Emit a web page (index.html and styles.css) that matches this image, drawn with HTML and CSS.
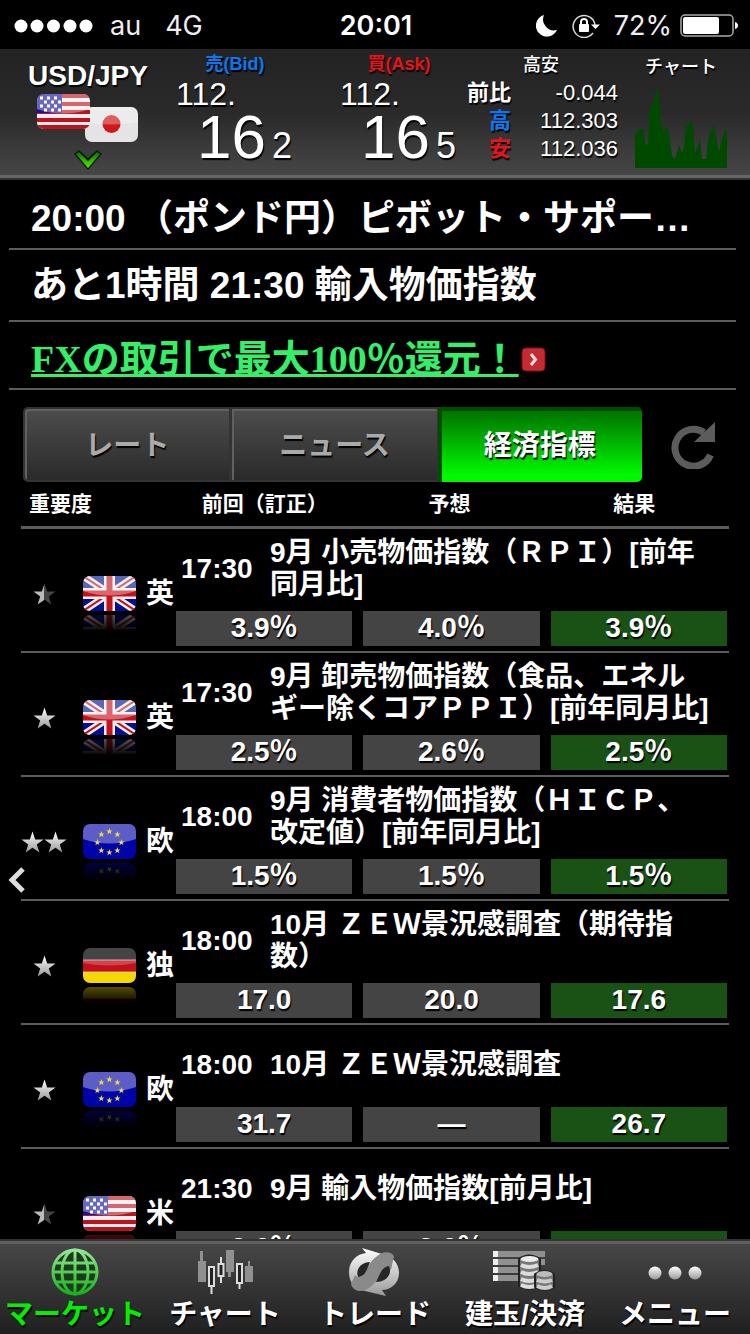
FILE: index.html
```html
<!DOCTYPE html>
<html lang="ja">
<head>
  <meta charset="UTF-8">
  <meta name="viewport" content="width=device-width, initial-scale=1">
  <title>経済指標</title>
  <link rel="stylesheet" href="styles.css">
</head>
<body>

  <!-- shared flags, stars and gradients -->
  <svg class="defs" width="0" height="0" aria-hidden="true">
    <defs>
      <clipPath id="round"><rect width="53" height="35" rx="7"/></clipPath>
      <linearGradient id="fade" x1="0" y1="0" x2="0" y2="1">
        <stop offset="0" stop-color="#000" stop-opacity=".6"/>
        <stop offset="1" stop-color="#000"/>
      </linearGradient>
      <linearGradient id="silver" x1="0" y1="0" x2="0" y2="1">
        <stop offset="0" stop-color="#fff"/>
        <stop offset="1" stop-color="#999"/>
      </linearGradient>
      <linearGradient id="half" x1="0" y1="0" x2="1" y2="0">
        <stop offset=".5" stop-color="#bbb"/>
        <stop offset=".5" stop-color="#444"/>
      </linearGradient>
      <linearGradient id="green" gradientUnits="userSpaceOnUse" x1="0" y1="0" x2="0" y2="48">
        <stop offset="0" stop-color="#9be89b"/>
        <stop offset="1" stop-color="#12b012"/>
      </linearGradient>
      <linearGradient id="lime" x1="0" y1="0" x2="0" y2="1">
        <stop offset="0" stop-color="#0a6a0a"/>
        <stop offset="1" stop-color="#5af000"/>
      </linearGradient>
      <path id="gloss" d="M0 0H53V15Q26 24 0 15Z" fill="#fff" fill-opacity=".36"/>
      <path id="star" d="M12 0L14.8 8.5H23.5L16.5 13.7L19.2 22L12 17L4.8 22L7.5 13.7L.5 8.5H9.200Z"/>
      <g id="uk" clip-path="url(#round)">
        <rect width="53" height="35" fill="#00108f"/>
        <path d="M0 0L53 35M53 0L0 35" stroke="#eee" stroke-width="7"/>
        <path d="M0 0L53 35M53 0L0 35" stroke="#c8101c" stroke-width="2"/>
        <path d="M26.500 0V35M0 17.500H53" stroke="#eee" stroke-width="11"/>
        <path d="M26.500 0V35M0 17.500H53" stroke="#c8101c" stroke-width="6"/>
        <use href="#gloss"/>
      </g>
      <g id="eu" clip-path="url(#round)">
        <rect width="53" height="35" fill="#0003a8"/>
        <use href="#gloss"/>
        <g fill="#f2e034">
          <use href="#star" transform="translate(23 4) scale(.28)"/>
          <use href="#star" transform="translate(31 7) scale(.28)"/>
          <use href="#star" transform="translate(35 15) scale(.28)"/>
          <use href="#star" transform="translate(31 23) scale(.28)"/>
          <use href="#star" transform="translate(23 25) scale(.28)"/>
          <use href="#star" transform="translate(15 23) scale(.28)"/>
          <use href="#star" transform="translate(11 15) scale(.28)"/>
          <use href="#star" transform="translate(15 7) scale(.28)"/>
        </g>
      </g>
      <g id="de" clip-path="url(#round)">
        <rect width="53" height="12" fill="#111"/>
        <rect y="12" width="53" height="12" fill="#c4101a"/>
        <rect y="24" width="53" height="11" fill="#f4d800"/>
        <path d="M0 0H53V15Q26 20 0 15Z" fill="#fff" fill-opacity=".22"/>
        <path d="M0 12H53M0 24H53" stroke="#fff" stroke-opacity=".6"/>
      </g>
      <g id="us" clip-path="url(#round)">
        <rect width="53" height="35" fill="#eee"/>
        <path d="M0 2H53M0 10H53M0 18H53M0 26H53M0 33H53" stroke="#c0121e" stroke-width="4"/>
        <rect width="25" height="19" fill="#1414a0"/>
        <path d="M3 4H24M7 8H24M3 12H24M7 16H24" stroke="#fff" stroke-width="3" stroke-dasharray="3 4"/>
        <use href="#gloss"/>
      </g>
      <g id="jp" clip-path="url(#round)">
        <rect width="53" height="35" fill="#e4e4e4"/>
        <circle cx="26.500" cy="17" r="9" fill="#d0181c"/>
        <path d="M0 0H53V15Q26 20 0 15Z" fill="#fff" fill-opacity=".3"/>
      </g>
    </defs>
  </svg>

  <div class="status">
    <div class="status-left">
      <svg width="80" height="14" viewBox="0 0 80 14" fill="#fff"><circle cx="7" cy="7" r="6.500"/><circle cx="23" cy="7" r="6.500"/><circle cx="39.500" cy="7" r="6.500"/><circle cx="56" cy="7" r="6.500"/><circle cx="72" cy="7" r="6.500"/></svg>
      <span>au</span>
      <span class="network">4G</span>
    </div>
    <strong>20:01</strong>
    <div class="status-right">
      <svg width="22" height="22" viewBox="0 0 22 22"><path d="M8 0A11 11 0 1 0 21 15A11 11 0 0 1 8 0Z" fill="#fff"/></svg>
      <svg class="lock" width="28" height="24" viewBox="0 0 28 24"><path d="M21 19A11 11 0 1 1 23 11" fill="none" stroke="#ddd" stroke-width="1.500"/><path d="M19 10.500H28L23.500 15Z" fill="#fff"/><rect x="7" y="10" width="10" height="8" rx="1" fill="#fff"/><path d="M9 11V8A3 3 0 0 1 15 8V11" fill="none" stroke="#fff" stroke-width="2"/></svg>
      <span>72%</span>
      <svg width="58" height="24" viewBox="0 0 58 24"><rect x="1" y="1" width="52" height="21" rx="4" fill="none" stroke="#aaa" stroke-width="1.500"/><rect x="3" y="3" width="36" height="17" rx="2" fill="#fff"/><path d="M55 8Q58 9 58 11.500T55 15Z" fill="#fff"/></svg>
    </div>
  </div>

  <header class="quote">
    <div class="pair">
      <b>USD/JPY</b>
      <svg width="102" height="48" viewBox="0 0 102 48"><use href="#jp" transform="translate(48 13)"/><use href="#us"/></svg>
      <svg class="arrow" width="30" height="20" viewBox="0 0 30 20"><path d="M1 4L6 0L15 8L24 0L29 4L15 20Z" fill="#031f03"/><path d="M3 4L6 2L15 11L24 2L27 4L15 18Z" fill="url(#lime)"/></svg>
    </div>
    <div class="price">
      <div class="side bid">売(Bid)</div>
      <div class="figure">112.</div>
      <div class="pips"><span>16</span><small>2</small></div>
    </div>
    <div class="price last">
      <div class="side ask">買(Ask)</div>
      <div class="figure">112.</div>
      <div class="pips"><span>16</span><small>5</small></div>
    </div>
    <div class="range">
      <h2>高安</h2>
      <dl>
        <dt>前比</dt><dd>-0.044</dd>
        <dt class="bid">高</dt><dd>112.303</dd>
        <dt class="ask">安</dt><dd>112.036</dd>
      </dl>
    </div>
    <div class="mini">
      <h2>チャート</h2>
      <svg width="92" height="81" viewBox="0 0 92 81"><path d="M0 81V45L3 46V42H9V46L10 58L13 57L15 20L18 17L20 7L22 3L23 0L25 20L26 36L29 46L32 37L35 52L37 69L40 72L44 58L47 66L49 61L51 38L53 40L55 32L58 38L60 66L62 60L65 52L67 72L71 72L73 54L75 45L79 38L81 50L84 65L87 52L90 43H92V81Z" fill="#004a00"/></svg>
    </div>
  </header>

  <section class="news">
    <p class="news-row">20:00 （ポンド円）ピボット・サポー…</p>
    <p class="news-row">あと1時間 21:30 輸入物価指数</p>
    <p class="news-row promo"><a href="#">FXの取引で最大100％還元！</a><svg width="25" height="25" viewBox="0 0 25 25"><rect x="1" y="1" width="23" height="23" rx="4" fill="#c32b32" stroke="#8c0e14"/><path d="M10 7L14.500 12.500L10 18" fill="none" stroke="#f4dcdc" stroke-width="3"/></svg></p>
  </section>

  <nav class="tabs">
    <div class="segments">
      <button type="button">レート</button>
      <button type="button">ニュース</button>
      <button type="button" class="active">経済指標</button>
    </div>
    <button type="button" class="reload" aria-label="更新">
      <svg width="46" height="48" viewBox="0 0 46 48"><path d="M39.500 34A18.500 18.500 0 1 1 33 11.500" fill="none" stroke="#5c5c5c" stroke-width="7"/><path d="M44 1V21H23Z" fill="#5c5c5c"/></svg>
    </button>
  </nav>

  <main class="board">
    <table>
      <thead>
        <tr><th class="level">重要度</th><th>前回（訂正）</th><th>予想</th><th>結果</th></tr>
      </thead>
      <tbody>
        <tr>
          <td class="country" rowspan="2"><div>
            <span class="stars"><svg width="23" height="22" viewBox="0 0 24 22"><use href="#star" fill="url(#half)"/></svg></span>
            <svg class="flag" width="53" height="36"><use href="#uk"/><use href="#uk" class="mirror"/><rect y="37" width="53" height="19" fill="url(#fade)"/><rect y="55" width="53" height="19"/><rect y="35" width="53" height="4"/></svg>
            <span>英</span>
          </div></td>
          <td class="event" colspan="3"><div><time>17:30</time><span>9月 小売物価指数（ＲＰＩ）[前年同月比]</span></div></td>
        </tr>
        <tr><td class="value">3.9％</td><td class="value">4.0％</td><td class="value result">3.9％</td></tr>
      </tbody>
      <tbody>
        <tr>
          <td class="country" rowspan="2"><div>
            <span class="stars"><svg width="23" height="22" viewBox="0 0 24 22"><use href="#star" fill="url(#silver)"/></svg></span>
            <svg class="flag" width="53" height="36"><use href="#uk"/><use href="#uk" class="mirror"/><rect y="37" width="53" height="19" fill="url(#fade)"/><rect y="55" width="53" height="19"/><rect y="35" width="53" height="4"/></svg>
            <span>英</span>
          </div></td>
          <td class="event" colspan="3"><div><time>17:30</time><span>9月 卸売物価指数（食品、エネルギー除くコアＰＰＩ）[前年同月比]</span></div></td>
        </tr>
        <tr><td class="value">2.5％</td><td class="value">2.6％</td><td class="value result">2.5％</td></tr>
      </tbody>
      <tbody>
        <tr>
          <td class="country" rowspan="2"><div>
            <span class="stars"><svg width="23" height="22" viewBox="0 0 24 22"><use href="#star" fill="url(#silver)"/></svg><svg width="23" height="22" viewBox="0 0 24 22"><use href="#star" fill="url(#silver)"/></svg></span>
            <svg class="flag" width="53" height="36"><use href="#eu"/><use href="#eu" class="mirror"/><rect y="37" width="53" height="19" fill="url(#fade)"/><rect y="55" width="53" height="19"/><rect y="35" width="53" height="4"/></svg>
            <span>欧</span>
          </div></td>
          <td class="event" colspan="3"><div><time>18:00</time><span>9月 消費者物価指数（ＨＩＣＰ、改定値）[前年同月比]</span></div></td>
        </tr>
        <tr><td class="value">1.5％</td><td class="value">1.5％</td><td class="value result">1.5％</td></tr>
      </tbody>
      <tbody>
        <tr>
          <td class="country" rowspan="2"><div>
            <span class="stars"><svg width="23" height="22" viewBox="0 0 24 22"><use href="#star" fill="url(#silver)"/></svg></span>
            <svg class="flag" width="53" height="36"><use href="#de"/><use href="#de" class="mirror"/><rect y="37" width="53" height="19" fill="url(#fade)"/><rect y="55" width="53" height="19"/><rect y="35" width="53" height="4"/></svg>
            <span>独</span>
          </div></td>
          <td class="event" colspan="3"><div><time>18:00</time><span>10月 ＺＥＷ景況感調査（期待指数）</span></div></td>
        </tr>
        <tr><td class="value">17.0</td><td class="value">20.0</td><td class="value result">17.6</td></tr>
      </tbody>
      <tbody>
        <tr>
          <td class="country" rowspan="2"><div>
            <span class="stars"><svg width="23" height="22" viewBox="0 0 24 22"><use href="#star" fill="url(#silver)"/></svg></span>
            <svg class="flag" width="53" height="36"><use href="#eu"/><use href="#eu" class="mirror"/><rect y="37" width="53" height="19" fill="url(#fade)"/><rect y="55" width="53" height="19"/><rect y="35" width="53" height="4"/></svg>
            <span>欧</span>
          </div></td>
          <td class="event" colspan="3"><div><time>18:00</time><span>10月 ＺＥＷ景況感調査</span></div></td>
        </tr>
        <tr><td class="value">31.7</td><td class="value">―</td><td class="value result">26.7</td></tr>
      </tbody>
      <tbody>
        <tr>
          <td class="country" rowspan="2"><div>
            <span class="stars"><svg width="23" height="22" viewBox="0 0 24 22"><use href="#star" fill="url(#half)"/></svg></span>
            <svg class="flag" width="53" height="36"><use href="#us"/><use href="#us" class="mirror"/><rect y="37" width="53" height="19" fill="url(#fade)"/><rect y="55" width="53" height="19"/><rect y="35" width="53" height="4"/></svg>
            <span>米</span>
          </div></td>
          <td class="event" colspan="3"><div><time>21:30</time><span>9月 輸入物価指数[前月比]</span></div></td>
        </tr>
        <tr><td class="value">0.6％</td><td class="value">0.6％</td><td class="value result"></td></tr>
      </tbody>
    </table>
    <button type="button" class="back" aria-label="戻る">
      <svg width="18" height="26" viewBox="0 0 18 26"><path d="M16 2L5 13L16 24" fill="none" stroke="#ddd" stroke-width="5"/></svg>
    </button>
  </main>

  <nav class="tabbar">
    <a href="#" class="active">
      <svg width="48" height="48" viewBox="0 0 48 48"><circle cx="24" cy="24" r="22" fill="#1c3a1c"/><g fill="none" stroke="url(#green)" stroke-width="3"><circle cx="24" cy="24" r="22"/><ellipse cx="24" cy="24" rx="13" ry="22"/><path d="M24 2V46M5 15H43M2 24H46M5 34H43"/></g></svg>
      <span>マーケット</span>
    </a>
    <a href="#">
      <svg width="56" height="48" viewBox="0 0 56 48"><g fill="#909090"><path d="M1 13H3V3H6V13H9V34H1ZM29 2H37V24H34V29H31V24H29ZM48 18H51V13H53V18H56V34H48Z"/></g><g fill="#222" stroke="#ddd" stroke-width="2"><path d="M12 19H17V38H12ZM21.500 16H26.500V28H21.500ZM40 16H45V35H40Z"/><path d="M14.500 38V46M24 16V9M24 28V35M42.500 35V41"/></g></svg>
      <span>チャート</span>
    </a>
    <a href="#">
      <svg width="56" height="48" viewBox="2 0 56 48"><path d="M17 0L37 6C48 8 54 16 54 25C54 35 46 42 37 42L41 48L20 43C9 41 4 34 4 24C4 13 12 6 21 5Z" fill="url(#silver)"/><path d="M6 36C8 44 17 45 24 40C32 35 33 29 37 24C40 20 44 19 46 22L49 8C44 2 37 4 31 9C24 14 23 21 19 26C16 30 12 30 10 27Z" fill="#8a8a8a"/><path d="M13 29C10 21 17 14 25 14C22 21 21 28 13 29Z" fill="#262626"/><path d="M44 18C48 27 40 34 31 34C35 27 36 19 44 18Z" fill="#262626"/></svg>
      <span>トレード</span>
    </a>
    <a href="#">
      <svg width="64" height="48" viewBox="1 0 64 48"><path d="M6 3H53V9H6ZM6 11H53V17H6ZM6 19H28V25H6ZM6 27H28V33H6Z" fill="#909090"/><path d="M1 3H6V9H1ZM1 11H6V17H1ZM1 19H6V25H1ZM1 27H6V33H1Z" fill="#eee"/><path d="M27 11Q37 4 48 11V38Q37 44 27 38Z" fill="#777" stroke="#222" stroke-width="2"/><ellipse cx="37.500" cy="11" rx="9" ry="3" fill="#eee"/><path d="M29 17Q37 21 46 17M29 24Q37 28 46 24M29 31Q37 35 46 31M29 37Q37 41 46 37" fill="none" stroke="#ddd" stroke-width="4"/><path d="M43 26Q53 20 62 26V39Q53 45 43 39Z" fill="#777" stroke="#222" stroke-width="2"/><ellipse cx="52.500" cy="26" rx="8" ry="3" fill="#bbb"/><path d="M45 32Q53 35 60 32M45 38Q53 42 60 38" fill="none" stroke="#ccc" stroke-width="4"/></svg>
      <span>建玉/決済</span>
    </a>
    <a href="#">
      <svg width="56" height="48" viewBox="0 0 56 48"><g fill="url(#silver)"><circle cx="8" cy="25" r="6.500"/><circle cx="28" cy="25" r="6.500"/><circle cx="48" cy="25" r="6.500"/></g></svg>
      <span>メニュー</span>
    </a>
  </nav>

</body>
</html>
```
FILE: styles.css
```css
* {
  box-sizing: border-box;
}

body {
  margin: 0;
  height: 100vh;
  display: flex;
  flex-direction: column;
  background: #000;
  color: #fff;
  font-family: "Liberation Sans", "Noto Sans CJK JP", sans-serif;
  font-size: 28px;
  overflow: hidden;
}

svg {
  display: block;
  flex: none;
}

button {
  font: inherit;
  color: inherit;
  border: none;
  padding: 0;
  background: none;
  cursor: pointer;
}

.defs {
  position: absolute;
}

/* status bar */
.status {
  flex: none;
  height: 49px;
  display: grid;
  grid-template-columns: 1fr auto 1fr;
  align-items: center;
  padding: 2px 12px 0 14px;
  font-family: Inter, sans-serif;
  font-size: 27px;
}

.status strong {
  font-weight: 600;
}

.status-left,
.status-right {
  display: flex;
  align-items: center;
  gap: 16px;
  color: #eee;
}

.network {
  margin-left: 8px;
}

.status-right {
  justify-content: flex-end;
  gap: 8px;
}

.lock {
  margin: 0 6px;
}

/* quote header */
.quote {
  flex: none;
  height: 131px;
  display: flex;
  background: linear-gradient(#232323, #2a2a2a 50%, #484848);
  border-bottom: 2px solid #333;
  box-shadow: inset 0 -3px #666;
  text-shadow: 1px 2px 1px #000;
}

.quote h2 {
  margin: 0;
  font-size: 18px;
  font-weight: 500;
  line-height: 28px;
  text-align: center;
}

.pair {
  width: 176px;
  display: flex;
  flex-direction: column;
  align-items: center;
  padding-top: 12px;
}

.pair b {
  line-height: 30px;
}

.pair svg {
  margin-top: 3px;
}

.pair .arrow {
  margin-top: 8px;
}

.price {
  width: 164px;
}

.price.last {
  width: 124px;
}

.side {
  width: 118px;
  font-size: 18px;
  font-weight: bold;
  line-height: 30px;
  text-align: center;
}

.bid {
  color: #0a78f0;
}

.ask {
  color: #e8141c;
}

.figure {
  font-size: 32px;
  line-height: 30px;
}

.pips {
  display: flex;
  align-items: baseline;
  justify-content: flex-end;
  gap: 6px;
  width: 116px;
  line-height: 56px;
}

.pips span {
  font-size: 62px;
}

.pips small {
  font-size: 36px;
}

.range {
  flex: 1;
  padding-top: 2px;
}

.range dl {
  display: grid;
  grid-template-columns: 47px 1fr;
  margin: 0;
  font-size: 22px;
  line-height: 28px;
  text-align: right;
}

.range dt {
  font-weight: bold;
}

.range dd {
  margin: 0;
}

.mini {
  width: 132px;
  padding: 4px 23px 0 17px;
}

.mini svg {
  margin-top: 6px;
}

/* news */
.news {
  flex: none;
  padding: 0 14px 0 9px;
  font-size: 37px;
}

.news-row {
  margin: 0;
  height: 72px;
  padding-left: 22px;
  border-bottom: 2px solid #5c5c5c;
  font-weight: bold;
  line-height: 72px;
  white-space: nowrap;
  overflow: hidden;
}

.news-row:first-child {
  height: 70px;
  line-height: 78px;
}

.promo {
  height: 68px;
  display: flex;
  align-items: center;
  padding-top: 8px;
  font-family: "Liberation Serif", "Noto Sans CJK JP", serif;
  font-size: 38px;
}

.promo a {
  color: #34f068;
}

.promo svg {
  margin-left: 2px;
}

/* segmented tabs */
.tabs {
  flex: none;
  display: flex;
  align-items: center;
  margin-top: 17px;
  padding: 0 33px 0 23px;
}

.segments {
  flex: 1;
  display: flex;
  height: 75px;
}

.segments button {
  flex: 1;
  padding-bottom: 4px;
  border: 2px solid #333;
  border-width: 2px 1px 2px 2px;
  background: linear-gradient(#4d4d4d, #2a2a2a);
  box-shadow: inset 2px 2px #606060;
  color: #aaa;
  font-weight: bold;
  text-shadow: 1px 2px 1px #000;
}

.segments button:first-child {
  border-radius: 5px 0 0 5px;
}

.segments .active {
  border: none;
  border-radius: 0 5px 5px 0;
  background: linear-gradient(#006a00, #00f800 90%);
  box-shadow: inset 4px 4px #004d00;
  color: #fff;
}

.reload {
  margin-left: 29px;
}

/* indicators */
.board {
  flex: 1;
  min-height: 0;
  position: relative;
  padding: 0 21px;
  overflow: hidden;
}

table {
  display: block;
}

thead {
  display: block;
  padding: 0 8px 0 2px;
  border-bottom: 3px solid #5c5c5c;
}

thead tr,
tbody {
  display: grid;
  grid-template-columns: 144px 1fr 1fr 1fr;
  column-gap: 11px;
}

thead tr {
  height: 44px;
  line-height: 44px;
  font-size: 21px;
}

th,
td {
  padding: 0;
}

.level {
  text-align: left;
  padding-left: 6px;
}

tbody {
  height: 124px;
  grid-template-rows: 82px 35px;
  padding-right: 2px;
  border-bottom: 2px solid #5c5c5c;
  font-weight: bold;
}

tbody tr {
  display: contents;
}

.country {
  grid-row: span 2;
}

.country div {
  display: flex;
  align-items: center;
  padding-top: 47px;
  line-height: 36px;
}

.stars {
  flex: none;
  width: 46px;
  display: flex;
  justify-content: center;
}

.flag {
  margin: 0 10px 0 16px;
  overflow: visible;
}

.mirror {
  transform: translateY(74px) scaleY(-1);
}

.event {
  grid-column: span 3;
}

.event div {
  display: flex;
  align-items: center;
  height: 64px;
  margin-top: 8px;
  padding-right: 16px;
  line-height: 32px;
}

.event time {
  width: 94px;
  flex: none;
  padding-left: 5px;
}

.value {
  background: #444;
  line-height: 34px;
  text-align: center;
  text-shadow: 1px 2px 1px #000;
}

.result {
  background: #1a5216;
}

.back {
  position: absolute;
  left: 7px;
  top: 385px;
}

/* bottom bar */
.tabbar {
  flex: none;
  height: 95px;
  display: flex;
  background: linear-gradient(#484848, #202020);
  border-top: 2px solid #333;
  box-shadow: inset 0 3px #606060;
}

.tabbar a {
  flex: 1;
  display: flex;
  flex-direction: column;
  align-items: center;
  justify-content: space-between;
  padding: 7px 0 2px;
  color: #fff;
  font-weight: bold;
  line-height: 34px;
  text-decoration: none;
  white-space: nowrap;
  text-shadow: 1px 2px 1px #000;
}

.tabbar .active {
  color: #00f000;
}
```
